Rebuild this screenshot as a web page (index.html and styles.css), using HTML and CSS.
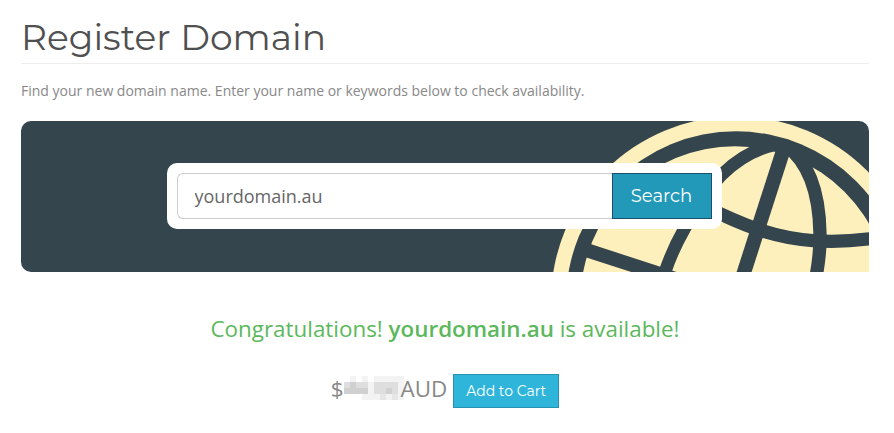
FILE: index.html
```html
<!DOCTYPE html>
<html lang="en">
<head>
    <meta charset="UTF-8">
    <meta name="viewport" content="width=device-width, initial-scale=1.0">
    <title>Register Domain</title>
    <link rel="stylesheet" href="styles.css">
</head>
<body>
    <div class="container">
        <h1>Register Domain</h1>
        <p class="tagline">Find your new domain name. Enter your name or keywords below to check availability.</p>

        <div class="domain-banner">
            <svg class="globe" viewBox="3 33 984 453" aria-hidden="true">
                <circle cx="588" cy="574" r="555" fill="#fef0bc"/>
                <circle cx="588" cy="574" r="510" fill="#35454d"/>
                <circle cx="585" cy="572" r="463.5" fill="#fef0bc"/>
                <g fill="none" stroke="#35454d" stroke-width="40">
                    <path d="M734 108L603 515" stroke-width="43"/>
                    <path d="M120 414L588 566" stroke-width="42"/>
                    <path d="M500 292Q580 332 652 358Q740 387 819 392Q905 398 1000 385"/>
                    <path d="M368 508L375 486Q398 418 433 357Q487 255 545 194Q615 125 700 105" stroke-width="38"/>
                    <path d="M735 105C800 150 838 240 840 372C841 410 837 450 829 495"/>
                </g>
            </svg>
            <form class="search-box">
                <input type="text" name="domain" value="yourdomain.au">
                <button type="submit">Search</button>
            </form>
        </div>

        <p class="available">Congratulations! <strong>yourdomain.au</strong> is available!</p>
        <div class="price-row">
            <span class="price">$</span>
            <svg class="price-hidden" viewBox="0 0 60 24" shape-rendering="crispEdges" aria-hidden="true">
                <path fill="#f3f3f3" d="M6 0h6v6h-6zM18 0h6v6h-6zM24 6h6v12h-6zM30 0h24v6h-24zM54 0h6v24h-6zM18 18h36v6h-36z"/>
                <path fill="#dedede" d="M0 6h24v6h-24zM30 6h24v12h-24z"/>
                <path fill="#e6e6e6" d="M36 18h6v6h-6zM48 18h6v6h-6z"/>
                <path fill="#d0d0d0" d="M0 12h24v6h-24zM6 6h6v6h-6zM42 12h6v6h-6z"/>
            </svg>
            <span class="price">AUD</span>
            <button class="btn-cart">Add to Cart</button>
        </div>
    </div>
</body>
</html>
```

FILE: styles.css
```css
body {
    font-family: "Open Sans", sans-serif;
    font-size: 14px;
    color: #888;
    background-color: #fff;
    margin: 0;
    padding: 0;
}
.container {
    padding: 15px 25px 0 21px;
}
h1 {
    font-family: Montserrat, Inter, sans-serif;
    font-size: 36px;
    font-weight: 400;
    line-height: 44px;
    color: #505050;
    margin: 0;
    padding-bottom: 4px;
    border-bottom: 1px solid #eee;
}
.tagline {
    line-height: 20px;
    margin: 17px 0 20px;
}
.domain-banner {
    position: relative;
    display: flex;
    justify-content: center;
    height: 151px;
    box-sizing: border-box;
    padding: 42px 2px 0 0;
    background-color: #35454d;
    border-radius: 10px 10px 0 10px;
    overflow: hidden;
}
.globe {
    position: absolute;
    top: 0;
    right: 0;
    width: 328px;
    height: 151px;
}
.search-box {
    position: relative;
    display: flex;
    width: 555px;
    height: 66px;
    box-sizing: border-box;
    padding: 10px;
    background-color: #fff;
    border-radius: 10px;
}
.search-box input {
    flex: 1;
    min-width: 0;
    padding: 0 17px;
    font-family: "Open Sans", sans-serif;
    font-size: 18px;
    color: #666;
    border: 1px solid #ccc;
    border-right: none;
    border-radius: 6px 0 0 6px;
}
.search-box button {
    width: 100px;
    padding: 0;
    font-family: Montserrat, Inter, sans-serif;
    font-size: 18px;
    color: #fff;
    background-color: #2299b9;
    border: 1px solid #1b4f69;
}
.available {
    margin: 40px 0 28px;
    font-size: 22.4px;
    line-height: 34px;
    text-align: center;
    color: #5cb85c;
}
.available strong {
    font-weight: 600;
}
.price-row {
    display: flex;
    align-items: center;
    justify-content: center;
    height: 34px;
}
.price {
    font-size: 22.4px;
    line-height: 30px;
    padding-bottom: 5px;
}
.price-hidden {
    width: 60px;
    height: 24px;
    margin: 0 -3px 0 0;
    padding-bottom: 6px;
}
.btn-cart {
    width: 106px;
    height: 34px;
    margin-left: 6px;
    padding: 0;
    font-family: Montserrat, Inter, sans-serif;
    font-size: 14px;
    color: #fff;
    background-color: #2fb5d9;
    border: 1px solid #2793b1;
}
```
